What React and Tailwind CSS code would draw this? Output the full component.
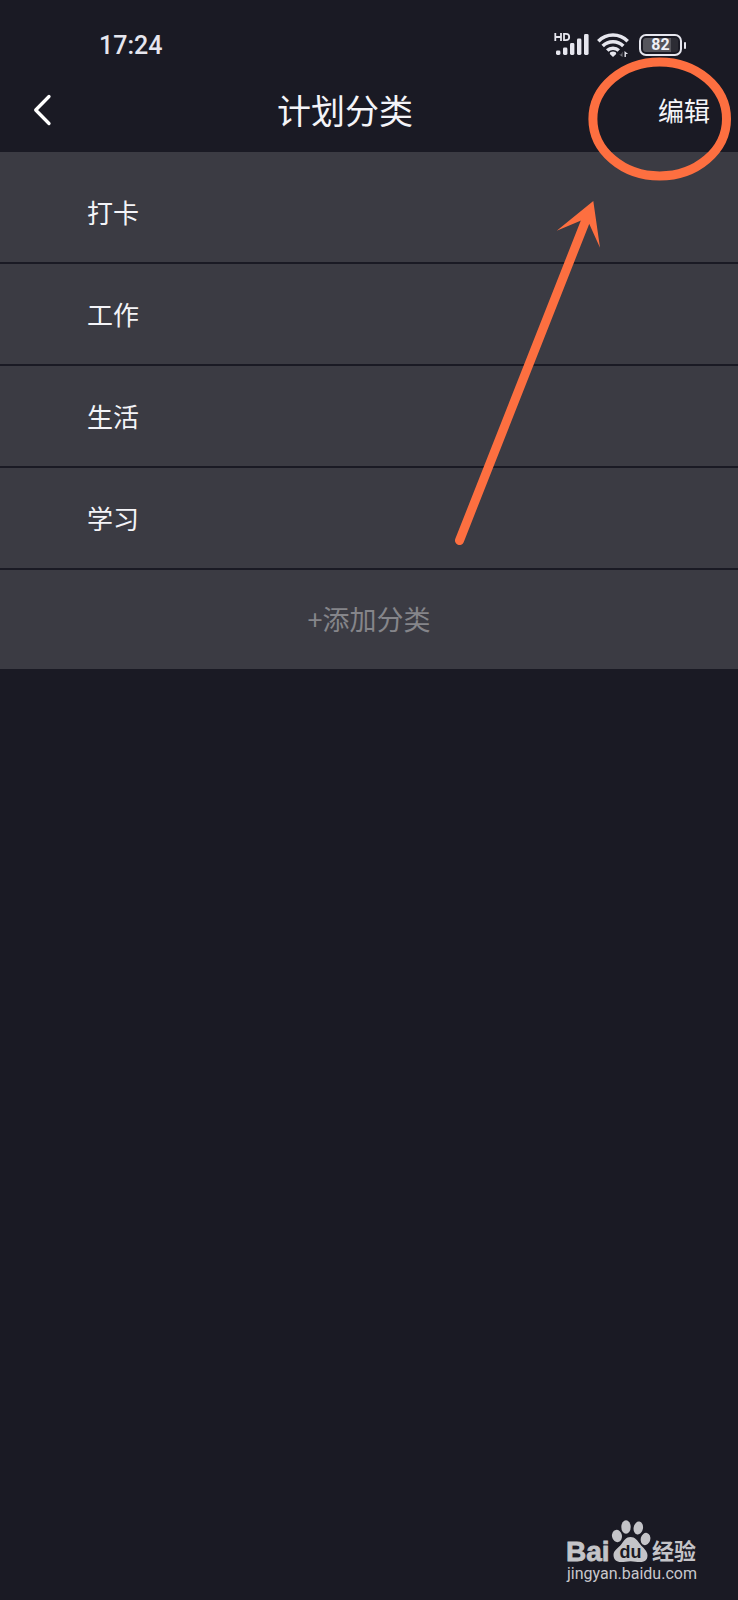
const categories = ['打卡', '工作', '生活', '学习'];

function SignalIcon() {
  return (
    <svg width="36" height="26" viewBox="0 0 36 26" fill="#e6e6ee" aria-hidden="true">
      <g fill="none" stroke="#e6e6ee" strokeWidth="1.8">
        <path d="M1.300 1v8M7 1v8M1.300 5h5.700M10 1.800v6.400h2a3.200 3.200 0 0 0 0-6.400z" />
      </g>
      <rect x="2" y="18.500" width="4.400" height="4.500" rx="1.400" />
      <rect x="9" y="15.500" width="4.400" height="7.500" rx="1.400" />
      <rect x="16" y="11" width="4.400" height="12" rx="1.400" />
      <rect x="23" y="6.500" width="4.400" height="16.500" rx="1.400" />
      <rect x="30" y="2" width="4.600" height="21" rx="1.400" />
    </svg>
  );
}

function WifiIcon() {
  return (
    <svg width="32" height="24" viewBox="0 0 32 24" aria-hidden="true">
      <g fill="none" stroke="#e6e6ee" strokeWidth="3.500">
        <path d="M1.300 8.300a20.500 20.500 0 0 1 29.400 0" />
        <path d="M5.700 13a14.500 14.500 0 0 1 20.600 0" />
        <path d="M10.200 17.600a8.300 8.300 0 0 1 11.600 0" />
      </g>
      <path d="M16 24l-3.200-3a2.400 2.400 0 0 1 .8-1.900 5 5 0 0 1 4.800 0 2.400 2.400 0 0 1 .8 1.900z" fill="#e6e6ee" />
      <path d="M25.500 18.500v5.500l-3.300-2.600h2z" fill="#77777f" />
      <path d="M27.500 24v-6l3.600 3h-2.200v3z" fill="#e6e6ee" />
    </svg>
  );
}

function Battery() {
  return (
    <span className="flex items-center gap-[2px]">
      <span className="flex h-[22px] w-[43px] rounded-[7px] border-2 border-[#e6e6ee] p-[2px]">
        <span className="flex flex-1 items-center justify-center rounded-[3px] bg-linear-to-r from-[#55555c] from-80% to-[#2c2c34] to-80% text-[16px] leading-none font-bold text-[#f0f0f6]">
          82
        </span>
      </span>
      <span className="h-[7px] w-[2px] rounded-full bg-[#e6e6ee]" />
    </span>
  );
}

function Highlight() {
  return (
    <svg
      className="pointer-events-none absolute top-0 right-0"
      width="300"
      height="560"
      viewBox="438 0 300 560"
      aria-hidden="true"
    >
      <ellipse cx="659.700" cy="118.900" rx="66.800" ry="57" fill="none" stroke="#fd6f40" strokeWidth="9" />
      <path d="M459.500 540.500L585.500 221" stroke="#fd6f40" strokeWidth="9" strokeLinecap="round" />
      <path d="M593.300 201L600 247.700L589.300 224L581.700 220.300L556.700 230.700Z" fill="#fd6f40" />
    </svg>
  );
}

function Watermark() {
  return (
    <div className="absolute right-10 bottom-[14px] flex flex-col items-start text-[#c8c8cc]">
      <svg
        className="overflow-visible"
        width="131"
        height="42"
        viewBox="0 0 131 42"
        fill="#c4c4c8"
        role="img"
        aria-label="Baidu 经验"
      >
        <text
          x="-1"
          y="41"
          fontSize="28"
          fontWeight="700"
          stroke="#c4c4c8"
          strokeWidth="0.800"
          fontFamily="Liberation Sans, Arial, sans-serif"
        >
          Bai
        </text>
        <ellipse cx="50" cy="16" rx="5" ry="6.200" transform="rotate(-12 50 16)" />
        <ellipse cx="59" cy="7" rx="4.700" ry="6.800" />
        <ellipse cx="71.300" cy="8" rx="4.700" ry="6.500" transform="rotate(10 71.300 8)" />
        <ellipse cx="78.500" cy="19" rx="4.800" ry="6.200" transform="rotate(14 78.500 19)" />
        <path d="M63.500 17c4.500 0 7 3.500 9.500 7 3 4 7.500 6.500 7.500 11.500 0 5-3.500 6.500-7.500 6.500-3.500 0-6-.8-9.500-.8s-6 .8-9.500.8c-4.500 0-7.500-2.500-7.500-7 0-5 5-7 8-11 2.500-3.500 4.500-7 9-7z" />
        <text
          x="63.500"
          y="37.500"
          textAnchor="middle"
          fontSize="18"
          fontWeight="700"
          fill="#1a1a24"
          fontFamily="Liberation Sans, Arial, sans-serif"
        >
          du
        </text>
        <text x="85" y="39" fontSize="22" fontWeight="700" fontFamily="Noto Sans CJK SC, sans-serif">
          经验
        </text>
      </svg>
      <span className="font-[Roboto,sans-serif] text-[16px] leading-6">jingyan.baidu.com</span>
    </div>
  );
}

export default function App() {
  return (
    <div className="relative min-h-screen bg-[#1a1a24] font-['Noto_Sans_CJK_SC',sans-serif] text-[#f4f4f8]">
      <div className="flex h-[68px] items-end justify-between pr-[52px] pb-[10px] pl-[99px] font-[Roboto,sans-serif]">
        <time className="text-[25px] leading-6 font-medium text-[#e6e6ee]">17:24</time>
        <div className="flex items-center gap-[10px]">
          <div className="flex items-center gap-[7px]">
            <SignalIcon />
            <WifiIcon />
          </div>
          <Battery />
        </div>
      </div>

      <header className="flex h-[84px] items-center">
        <button type="button" aria-label="返回" className="flex h-full w-[60px] items-center justify-end pr-2">
          <svg width="20" height="34" viewBox="0 0 20 34" fill="none" stroke="#ffffff" strokeWidth="3.300" strokeLinecap="round" strokeLinejoin="round">
            <path d="M17 3.500L3.700 17L17 30.500" />
          </svg>
        </button>
        <h1 className="flex-1 text-center text-[34px] leading-10">计划分类</h1>
        <button type="button" className="h-full px-7 pb-[2px] text-[26px]">编辑</button>
      </header>

      <main className="bg-[#3b3b43] pt-[10px]">
        <ul>
          {categories.map((name) => (
            <li
              key={name}
              className="flex h-[102px] items-center border-b-2 border-[#1a1a24] pb-[2px] pl-[87px] text-[26px]"
            >
              {name}
            </li>
          ))}
        </ul>
        <button type="button" className="h-[99px] w-full text-[27px] text-[#85858a]">+添加分类</button>
      </main>

      <Highlight />
      <Watermark />
    </div>
  );
}
